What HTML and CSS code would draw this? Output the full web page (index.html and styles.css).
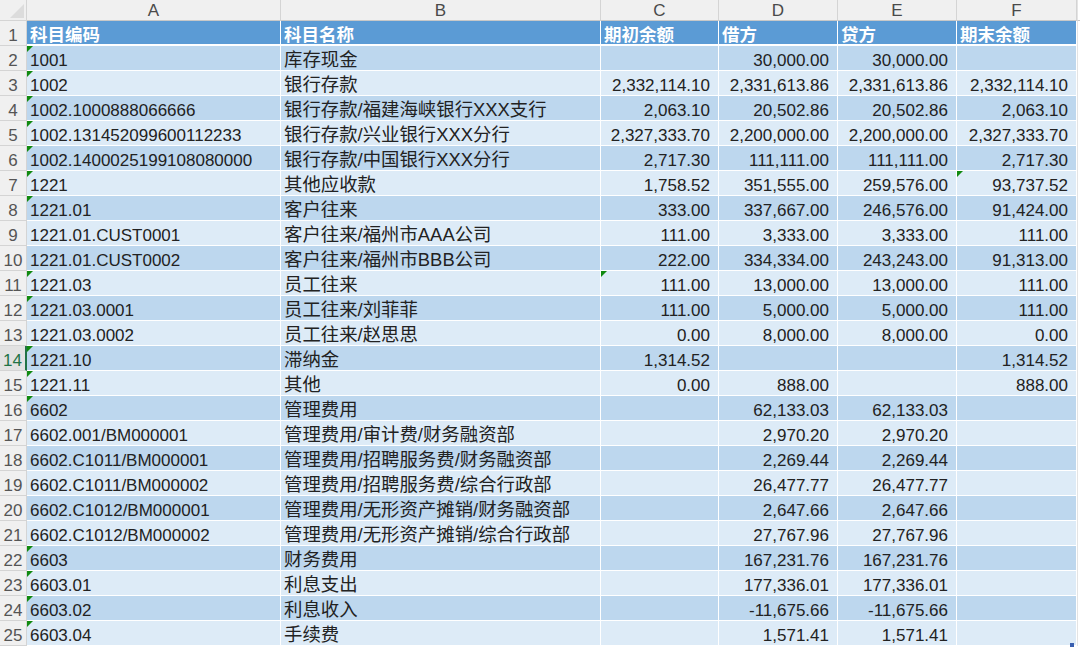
FILE: index.html
```html
<!DOCTYPE html>
<html lang="zh-CN">
<head>
<meta charset="utf-8">
<title>科目余额表</title>
<link rel="stylesheet" href="styles.css">
</head>
<body>
<div class="sheet">
  <div class="corner"><span class="corner-tri"></span></div>
  <div class="colh">A</div><div class="colh">B</div><div class="colh">C</div><div class="colh">D</div><div class="colh">E</div><div class="colh">F</div><div class="colh fill"></div>

  <div class="rowh">1</div><div class="c hd">科目编码</div><div class="c hd">科目名称</div><div class="c hd">期初余额</div><div class="c hd">借方</div><div class="c hd">贷方</div><div class="c hd">期末余额</div><div class="fill"></div>

  <div class="rowh">2</div><div class="c a tri">1001</div><div class="c a t">库存现金</div><div class="c a n"></div><div class="c a n">30,000.00</div><div class="c a n">30,000.00</div><div class="c a n"></div><div class="fill"></div>
  <div class="rowh">3</div><div class="c b tri">1002</div><div class="c b t">银行存款</div><div class="c b n">2,332,114.10</div><div class="c b n">2,331,613.86</div><div class="c b n">2,331,613.86</div><div class="c b n">2,332,114.10</div><div class="fill"></div>
  <div class="rowh">4</div><div class="c a tri">1002.1000888066666</div><div class="c a t">银行存款/福建海峡银行XXX支行</div><div class="c a n">2,063.10</div><div class="c a n">20,502.86</div><div class="c a n">20,502.86</div><div class="c a n">2,063.10</div><div class="fill"></div>
  <div class="rowh">5</div><div class="c b tri">1002.131452099600112233</div><div class="c b t">银行存款/兴业银行XXX分行</div><div class="c b n">2,327,333.70</div><div class="c b n">2,200,000.00</div><div class="c b n">2,200,000.00</div><div class="c b n">2,327,333.70</div><div class="fill"></div>
  <div class="rowh">6</div><div class="c a tri">1002.1400025199108080000</div><div class="c a t">银行存款/中国银行XXX分行</div><div class="c a n">2,717.30</div><div class="c a n">111,111.00</div><div class="c a n">111,111.00</div><div class="c a n">2,717.30</div><div class="fill"></div>
  <div class="rowh">7</div><div class="c b tri">1221</div><div class="c b t">其他应收款</div><div class="c b n">1,758.52</div><div class="c b n">351,555.00</div><div class="c b n">259,576.00</div><div class="c b n tri">93,737.52</div><div class="fill"></div>
  <div class="rowh">8</div><div class="c a tri">1221.01</div><div class="c a t">客户往来</div><div class="c a n">333.00</div><div class="c a n">337,667.00</div><div class="c a n">246,576.00</div><div class="c a n">91,424.00</div><div class="fill"></div>
  <div class="rowh">9</div><div class="c b">1221.01.CUST0001</div><div class="c b t">客户往来/福州市AAA公司</div><div class="c b n">111.00</div><div class="c b n">3,333.00</div><div class="c b n">3,333.00</div><div class="c b n">111.00</div><div class="fill"></div>
  <div class="rowh">10</div><div class="c a">1221.01.CUST0002</div><div class="c a t">客户往来/福州市BBB公司</div><div class="c a n">222.00</div><div class="c a n">334,334.00</div><div class="c a n">243,243.00</div><div class="c a n">91,313.00</div><div class="fill"></div>
  <div class="rowh">11</div><div class="c b tri">1221.03</div><div class="c b t">员工往来</div><div class="c b n tri">111.00</div><div class="c b n">13,000.00</div><div class="c b n">13,000.00</div><div class="c b n">111.00</div><div class="fill"></div>
  <div class="rowh">12</div><div class="c a tri">1221.03.0001</div><div class="c a t">员工往来/刘菲菲</div><div class="c a n">111.00</div><div class="c a n">5,000.00</div><div class="c a n">5,000.00</div><div class="c a n">111.00</div><div class="fill"></div>
  <div class="rowh">13</div><div class="c b">1221.03.0002</div><div class="c b t">员工往来/赵思思</div><div class="c b n">0.00</div><div class="c b n">8,000.00</div><div class="c b n">8,000.00</div><div class="c b n">0.00</div><div class="fill"></div>
  <div class="rowh sel">14</div><div class="c a tri">1221.10</div><div class="c a t">滞纳金</div><div class="c a n">1,314.52</div><div class="c a n"></div><div class="c a n"></div><div class="c a n">1,314.52</div><div class="fill"></div>
  <div class="rowh">15</div><div class="c b tri">1221.11</div><div class="c b t">其他</div><div class="c b n">0.00</div><div class="c b n">888.00</div><div class="c b n"></div><div class="c b n">888.00</div><div class="fill"></div>
  <div class="rowh">16</div><div class="c a tri">6602</div><div class="c a t">管理费用</div><div class="c a n"></div><div class="c a n">62,133.03</div><div class="c a n">62,133.03</div><div class="c a n"></div><div class="fill"></div>
  <div class="rowh">17</div><div class="c b">6602.001/BM000001</div><div class="c b t">管理费用/审计费/财务融资部</div><div class="c b n"></div><div class="c b n">2,970.20</div><div class="c b n">2,970.20</div><div class="c b n"></div><div class="fill"></div>
  <div class="rowh">18</div><div class="c a">6602.C1011/BM000001</div><div class="c a t">管理费用/招聘服务费/财务融资部</div><div class="c a n"></div><div class="c a n">2,269.44</div><div class="c a n">2,269.44</div><div class="c a n"></div><div class="fill"></div>
  <div class="rowh">19</div><div class="c b">6602.C1011/BM000002</div><div class="c b t">管理费用/招聘服务费/综合行政部</div><div class="c b n"></div><div class="c b n">26,477.77</div><div class="c b n">26,477.77</div><div class="c b n"></div><div class="fill"></div>
  <div class="rowh">20</div><div class="c a">6602.C1012/BM000001</div><div class="c a t">管理费用/无形资产摊销/财务融资部</div><div class="c a n"></div><div class="c a n">2,647.66</div><div class="c a n">2,647.66</div><div class="c a n"></div><div class="fill"></div>
  <div class="rowh">21</div><div class="c b">6602.C1012/BM000002</div><div class="c b t">管理费用/无形资产摊销/综合行政部</div><div class="c b n"></div><div class="c b n">27,767.96</div><div class="c b n">27,767.96</div><div class="c b n"></div><div class="fill"></div>
  <div class="rowh">22</div><div class="c a tri">6603</div><div class="c a t">财务费用</div><div class="c a n"></div><div class="c a n">167,231.76</div><div class="c a n">167,231.76</div><div class="c a n"></div><div class="fill"></div>
  <div class="rowh">23</div><div class="c b tri">6603.01</div><div class="c b t">利息支出</div><div class="c b n"></div><div class="c b n">177,336.01</div><div class="c b n">177,336.01</div><div class="c b n"></div><div class="fill"></div>
  <div class="rowh">24</div><div class="c a tri">6603.02</div><div class="c a t">利息收入</div><div class="c a n"></div><div class="c a n">-11,675.66</div><div class="c a n">-11,675.66</div><div class="c a n"></div><div class="fill"></div>
  <div class="rowh">25</div><div class="c b tri">6603.04</div><div class="c b t">手续费</div><div class="c b n"></div><div class="c b n">1,571.41</div><div class="c b n">1,571.41</div><div class="c b n"></div><div class="fill"></div>
</div>
<span class="resize-mark"></span>
</body>
</html>
```

FILE: styles.css
```css
html, body {
  margin: 0;
  padding: 0;
  background: #ffffff;
  overflow: hidden;
}

.sheet {
  display: grid;
  grid-template-columns: 27px 254px 320px 118px 119px 119px 120px 3px;
  grid-template-rows: 21px 25px;
  grid-auto-rows: 25px;
  width: 1080px;
  font-family: "Liberation Sans", "Noto Sans CJK SC", sans-serif;
  font-size: 17px;
  color: #222222;
}

.corner {
  position: relative;
  background: #f0f0f0;
  border-right: 1px solid #d4d4d4;
  border-bottom: 1px solid #d4d4d4;
  box-sizing: border-box;
}

.corner-tri {
  position: absolute;
  right: 2px;
  bottom: 2px;
  width: 0;
  height: 0;
  border-left: 14px solid transparent;
  border-bottom: 14px solid #dcdcdc;
}

.colh {
  background: #f0f0f0;
  border-right: 1px solid #d4d4d4;
  border-bottom: 1px solid #c8c8c8;
  box-sizing: border-box;
  color: #4a4a4a;
  font-size: 17px;
  line-height: 21px;
  text-align: center;
}

.colh.fill {
  border-right: none;
}

.rowh {
  background: #f0f0f0;
  border-right: 1px solid #d4d4d4;
  border-bottom: 1px solid #d4d4d4;
  box-sizing: border-box;
  text-align: center;
  color: #555555;
  font-size: 17px;
  line-height: 30px;
  overflow: hidden;
}

.rowh.sel {
  background: #e2e2e2;
  color: #217346;
  border-right: 2px solid #217346;
}

.c {
  position: relative;
  box-sizing: border-box;
  border-right: 1px solid #ffffff;
  border-bottom: 1px solid #ffffff;
  padding: 0 3px;
  line-height: 29px;
  white-space: nowrap;
  overflow: hidden;
}

.c.t {
  font-size: 18.4px;
  line-height: 28px;
}

.c.hd {
  background: #5b9bd5;
  color: #ffffff;
  font-weight: bold;
  font-size: 17.5px;
  border-bottom: 2px solid #ffffff;
  line-height: 28px;
}

.c.a {
  background: #bdd7ee;
}

.c.b {
  background: #ddebf7;
}

.c.n {
  text-align: right;
  padding-right: 8px;
}

.c.tri::before {
  content: "";
  position: absolute;
  left: 0;
  top: 0;
  width: 0;
  height: 0;
  border-top: 6px solid #108a10;
  border-right: 6px solid transparent;
}

.fill {
  background: #ffffff;
  border-left: 1px solid #e4e4e4;
}

.resize-mark {
  position: absolute;
  left: 1070px;
  top: 643px;
  width: 4px;
  height: 4px;
  background: #3a5fb0;
}
```
